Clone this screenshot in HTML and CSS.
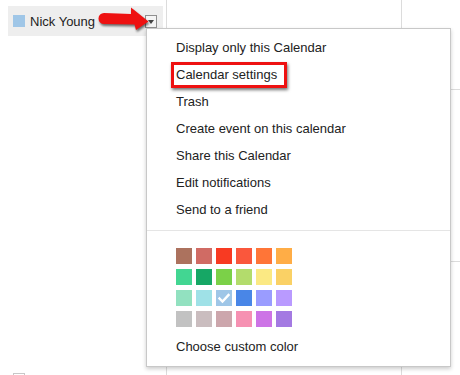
FILE: index.html
```html
<!DOCTYPE html>
<html>
<head>
<meta charset="utf-8">
<link rel="stylesheet" href="styles.css">
</head>
<body>
<div class="page">
  <aside class="sidebar">
    <div class="cal-row">
      <span class="cal-swatch"></span>
      <span class="cal-name">Nick Young</span>
      <span class="cal-drop"><span class="tri"></span></span>
    </div>
    <div class="next-box"></div>
  </aside>
  <div class="col col-main">
    <div class="cell c1"></div>
    <div class="cell c2"></div>
    <div class="cell c3"></div>
  </div>
  <div class="col col-side">
    <div class="cell c1"></div>
    <div class="cell c2"></div>
    <div class="cell c3"></div>
  </div>

  <svg class="arrow" width="56" height="34" viewBox="96 2 56 34">
    <path d="M104,13 L131,14 L131,7.5 L148.5,21.5 L136,30 L134.5,24.5 L104,24 A5.5,5.5 0 0 1 104,13 Z" fill="#ee1111"/>
  </svg>

  <div class="menu">
    <ul class="items">
      <li>Display only this Calendar</li>
      <li class="marked"><span class="mark"></span>Calendar settings</li>
      <li>Trash</li>
      <li>Create event on this calendar</li>
      <li>Share this Calendar</li>
      <li>Edit notifications</li>
      <li>Send to a friend</li>
    </ul>
    <div class="sep"></div>
    <div class="palette">
      <span class="sw s1"></span><span class="sw s2"></span><span class="sw s3"></span><span class="sw s4"></span><span class="sw s5"></span><span class="sw s6"></span>
      <span class="sw s7"></span><span class="sw s8"></span><span class="sw s9"></span><span class="sw s10"></span><span class="sw s11"></span><span class="sw s12"></span>
      <span class="sw s13"></span><span class="sw s14"></span><span class="sw s15 checked"><svg width="16" height="16" viewBox="0 0 16 16"><path d="M3.5,8.5 L6.5,11.5 L12.5,5" fill="none" stroke="#fff" stroke-width="2.4" stroke-linecap="square"/></svg></span><span class="sw s16"></span><span class="sw s17"></span><span class="sw s18"></span>
      <span class="sw s19"></span><span class="sw s20"></span><span class="sw s21"></span><span class="sw s22"></span><span class="sw s23"></span><span class="sw s24"></span>
    </div>
    <div class="custom">Choose custom color</div>
  </div>
</div>
</body>
</html>
```

FILE: styles.css
```css
html, body {
  margin: 0;
  padding: 0;
  background: #fff;
}
body {
  font-family: "Liberation Sans", Arial, sans-serif;
  font-size: 13px;
  color: #222;
}
.page {
  position: relative;
  width: 460px;
  height: 375px;
  overflow: hidden;
  display: grid;
  grid-template-columns: 167px 235px 1fr;
}
.sidebar {
  border-right: 1px solid #dcdcdc;
  padding: 6px 0 0 8px;
}
.cal-row {
  width: 155px;
  height: 30px;
  background: #eeeeee;
  display: flex;
  align-items: center;
  box-sizing: border-box;
  padding-left: 5px;
}
.cal-swatch {
  width: 12px;
  height: 12px;
  background: #9fc6e7;
  margin-top: -1px;
}
.cal-name {
  margin-left: 5px;
  line-height: 15px;
  color: #222;
}
.cal-drop {
  margin-left: auto;
  margin-right: 6px;
  width: 12px;
  height: 13px;
  box-sizing: border-box;
  border: 1px solid #8f8f8f;
  background: #f4f4f4;
  display: flex;
  align-items: center;
  justify-content: center;
}
.tri {
  width: 0;
  height: 0;
  border-left: 3px solid transparent;
  border-right: 3px solid transparent;
  border-top: 4px solid #444;
  margin-top: 1px;
}
.next-box {
  margin-top: 337px;
  margin-left: 5px;
  width: 12px;
  height: 12px;
  border: 1px solid #c8c8c8;
  box-sizing: border-box;
}
.col {
  display: grid;
  grid-template-rows: 90px 172px 1fr;
}
.col-main {
  border-right: 1px solid #dcdcdc;
}
.cell {
  border-bottom: 1px solid #dcdcdc;
}
.cell.c3 {
  border-bottom: none;
}
.arrow {
  position: absolute;
  left: 96px;
  top: 2px;
  filter: drop-shadow(1px 2px 1.2px rgba(0, 0, 0, 0.55));
}
.menu {
  position: absolute;
  left: 146px;
  top: 28px;
  width: 305px;
  height: 339px;
  box-sizing: border-box;
  background: #fff;
  border: 1px solid #c8c8c8;
  box-shadow: 0 2px 4px rgba(0, 0, 0, 0.2);
  padding-top: 5px;
}
.items {
  list-style: none;
  margin: 0;
  padding: 0;
}
.items li {
  height: 27px;
  line-height: 27px;
  padding-left: 29px;
  color: #222;
  white-space: nowrap;
}
.items li.marked {
  position: relative;
}
.mark {
  position: absolute;
  left: 24px;
  top: 1px;
  width: 116px;
  height: 26px;
  box-sizing: border-box;
  border: 3px solid #ee1111;
  box-shadow: 1px 2px 3px rgba(0, 0, 0, 0.55);
}
.sep {
  margin-top: 7px;
  height: 1px;
  background: #e5e5e5;
}
.palette {
  margin: 17px 0 0 29px;
  display: grid;
  grid-template-columns: repeat(6, 16px);
  grid-auto-rows: 16px;
  column-gap: 4px;
  row-gap: 5px;
}
.sw {
  display: block;
  width: 16px;
  height: 16px;
}
.sw svg {
  display: block;
}
.s1 { background: #ac725e; }
.s2 { background: #d06b64; }
.s3 { background: #f83a22; }
.s4 { background: #fa573c; }
.s5 { background: #ff7537; }
.s6 { background: #ffad46; }
.s7 { background: #42d692; }
.s8 { background: #16a765; }
.s9 { background: #7bd148; }
.s10 { background: #b3dc6c; }
.s11 { background: #fbe983; }
.s12 { background: #fad165; }
.s13 { background: #92e1c0; }
.s14 { background: #9fe1e7; }
.s15 { background: #9fc6e7; }
.s16 { background: #4986e7; }
.s17 { background: #9a9cff; }
.s18 { background: #b99aff; }
.s19 { background: #c2c2c2; }
.s20 { background: #cabdbf; }
.s21 { background: #cca6ac; }
.s22 { background: #f691b2; }
.s23 { background: #cd74e6; }
.s24 { background: #a47ae2; }
.custom {
  margin-top: 6px;
  height: 27px;
  line-height: 27px;
  padding-left: 29px;
  color: #222;
}
```
